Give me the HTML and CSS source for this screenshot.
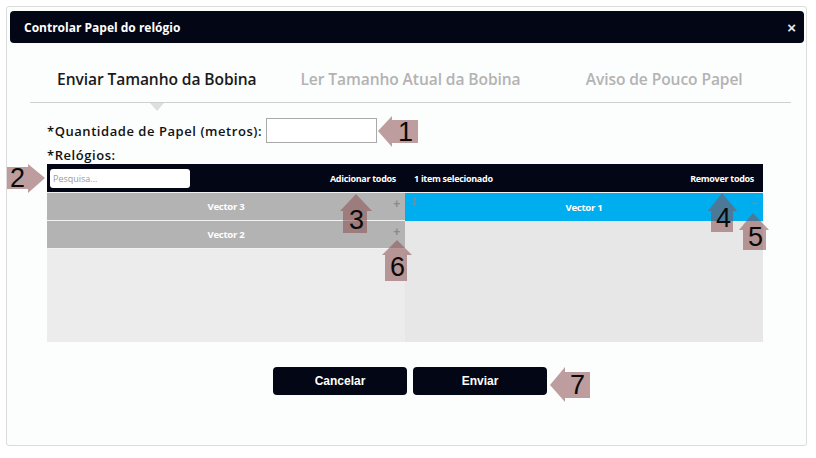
FILE: index.html
```html
<!DOCTYPE html>
<html lang="pt">
<head>
<meta charset="utf-8">
<title>Controlar Papel do relógio</title>
<link rel="stylesheet" href="styles.css">
</head>
<body>
<div class="modal">
  <div class="header">
    <span class="title">Controlar Papel do relógio</span>
    <span class="close">&#215;</span>
  </div>
  <div class="tabs">
    <div class="tab active">Enviar Tamanho da Bobina</div>
    <div class="tab">Ler Tamanho Atual da Bobina</div>
    <div class="tab">Aviso de Pouco Papel</div>
  </div>
  <div class="form">
    <div class="qty-row">
      <span class="field-label">*Quantidade de Papel (metros):</span>
      <span class="qty-input"></span>
    </div>
    <div class="field-label rel-label">*Relógios:</div>
    <div class="dual">
      <div class="pane pane-left">
        <div class="pane-head">
          <span class="search">Pesquisa...</span>
          <span class="head-link">Adicionar todos</span>
        </div>
        <div class="pane-body">
          <div class="item">Vector 3<span class="item-btn">+</span></div>
          <div class="item">Vector 2<span class="item-btn">+</span></div>
        </div>
      </div>
      <div class="pane pane-right">
        <div class="pane-head">
          <span class="head-info">1 item selecionado</span>
          <span class="head-link">Remover todos</span>
        </div>
        <div class="pane-body">
          <div class="item selected">
            <svg class="grip" width="5" height="9" viewBox="0 0 5 9"><path d="M2.5 0 L5 2.5 H3.3 V6.5 H5 L2.5 9 L0 6.5 H1.7 V2.5 H0 Z" fill="#6f8fa3"/></svg>
            Vector 1<span class="item-btn minus">&#8722;</span>
          </div>
        </div>
      </div>
    </div>
    <div class="actions">
      <button class="btn">Cancelar</button>
      <button class="btn">Enviar</button>
    </div>
  </div>
</div>

<div class="callout c1">
  <svg width="41" height="32" viewBox="0 0 41 32"><polygon points="0,15 14,0 14,4 40,4 40,27 14,27 14,31" /></svg>
  <span class="num n1">1</span>
</div>
<div class="callout c2">
  <svg width="42" height="30" viewBox="0 0 42 30"><polygon points="0,3 21,3 21,0 38,14 21,29 21,25 0,25" /></svg>
  <span class="num n2">2</span>
</div>
<div class="callout c3">
  <svg width="33" height="40" viewBox="0 0 33 40"><polygon points="16,0 32,17 27,17 27,39 3,39 3,17 0,17" /></svg>
  <span class="num n3">3</span>
</div>
<div class="callout c4">
  <svg width="30" height="40" viewBox="0 0 30 40"><polygon points="14,0 29,18 25,18 25,39 3,39 3,18 0,18" /></svg>
  <span class="num n4">4</span>
</div>
<div class="callout c5">
  <svg width="31" height="38" viewBox="0 0 31 38"><polygon points="14,0 30,17 27,17 27,37 4,37 4,17 0,17" /></svg>
  <span class="num n5">5</span>
</div>
<div class="callout c6">
  <svg width="31" height="42" viewBox="0 0 31 42"><polygon points="15,0 30,15 25,15 25,41 3,41 3,15 0,15" /></svg>
  <span class="num n6">6</span>
</div>
<div class="callout c7">
  <svg width="41" height="36" viewBox="0 0 41 36"><polygon points="0,18 15,0 15,5 40,5 40,31 15,31 15,35" /></svg>
  <span class="num n7">7</span>
</div>
</body>
</html>
```
FILE: styles.css
```css
* { box-sizing: border-box; }
html, body { margin: 0; padding: 0; background: #ffffff; }
body {
  position: relative;
  width: 816px;
  height: 458px;
  font-family: "Open Sans", "Noto Sans", sans-serif;
  color: #111;
  overflow: hidden;
}

.modal {
  margin: 6px 0 0 6px;
  width: 801px;
  height: 440px;
  border: 1px solid #dcdcdc;
  border-radius: 3px;
  background: #fcfdfd;
  padding: 4px 2px 0 3px;
}

.header {
  height: 32px;
  background: #030615;
  border-radius: 4px;
  display: flex;
  align-items: center;
  justify-content: space-between;
  padding: 0 8px 0 14px;
  color: #fff;
}
.title {
  font-size: 12px;
  font-weight: 700;
  letter-spacing: 0;
}
.close {
  font-family: "Liberation Sans", Arial, sans-serif;
  font-size: 15px;
  font-weight: 700;
  color: #e8e8e8;
}

.tabs {
  margin: 23px 13px 0 20px;
  display: grid;
  grid-template-columns: 1fr 1fr 1fr;
  border-bottom: 1px solid #cfcfcf;
  padding-bottom: 9px;
}
.tab {
  position: relative;
  text-align: center;
  font-size: 15.6px;
  font-weight: 600;
  line-height: 27px;
  letter-spacing: -0.1px;
  color: #b3b3b3;
}
.tab.active { color: #1a1a1a; }
.tab.active::after {
  content: "";
  position: absolute;
  left: 50%;
  bottom: -18px;
  margin-left: -7px;
  border-left: 7px solid transparent;
  border-right: 7px solid transparent;
  border-top: 8px solid #dedede;
}

.form {
  padding: 15px 0 0 37px;
}
.qty-row {
  display: flex;
  align-items: center;
  gap: 4px;
  height: 25px;
}
.field-label {
  font-size: 13px;
  font-weight: 600;
  letter-spacing: 0.55px;
  color: #111;
}
.qty-input {
  display: block;
  width: 111px;
  height: 25px;
  border: 1px solid #a9a9a9;
  background: #fff;
}
.rel-label {
  margin-top: 3px;
  line-height: 18px;
}

.dual {
  margin-top: 0;
  width: 716px;
  height: 178px;
  display: flex;
}
.pane { width: 358px; display: flex; flex-direction: column; }
.pane-head {
  height: 29px;
  background: #030615;
  border-bottom: 1px solid #f0f0f0;
  display: flex;
  align-items: center;
  justify-content: space-between;
  color: #fff;
  font-size: 9px;
  font-weight: 700;
  letter-spacing: -0.3px;
}
.pane-left .pane-head { padding: 0 9px 0 3px; }
.pane-right .pane-head { padding: 0 9px 0 9px; }
.search {
  width: 140px;
  height: 19px;
  background: #fff;
  border-radius: 3px;
  color: #9a9a9a;
  font-weight: 400;
  font-size: 9px;
  letter-spacing: 0;
  display: flex;
  align-items: center;
  padding-left: 3px;
}
.pane-body { flex: 1; }
.pane-left .pane-body { background: #ececec; }
.pane-right .pane-body { background: #e7e7e7; }
.item {
  position: relative;
  height: 28px;
  background: #b3b3b3;
  border-bottom: 1px solid #f2f2f2;
  display: flex;
  align-items: center;
  justify-content: center;
  color: #fff;
  font-size: 9.6px;
  font-weight: 700;
  letter-spacing: -0.3px;
}
.item.selected { background: #00aeef; border-bottom: none; }
.item-btn {
  position: absolute;
  right: 5px;
  top: 4px;
  font-family: "Liberation Sans", Arial, sans-serif;
  font-size: 12px;
  font-weight: 700;
  color: #8a8a8a;
}
.item-btn.minus { color: #5f92b3; right: 6px; top: 3px; }
.grip { position: absolute; left: 7px; top: 4px; }

.actions {
  margin-top: 25px;
  display: flex;
  justify-content: center;
  gap: 6px;
  width: 726px;
}
.btn {
  width: 134px;
  height: 28px;
  border: none;
  border-radius: 4px;
  background: #030615;
  color: #fff;
  font-family: "Liberation Sans", Arial, sans-serif;
  font-size: 12px;
  font-weight: 700;
}

.callout { position: absolute; }
.callout svg { display: block; }
.callout polygon { fill: rgba(138, 78, 80, 0.55); }
.num {
  position: absolute;
  font-family: "Liberation Sans", Arial, sans-serif;
  font-size: 27px;
  line-height: 27px;
  color: #0a0a0a;
}
.c1 { left: 378px; top: 116px; }
.n1 { left: 20px; top: 3px; }
.c2 { left: 7px; top: 164px; }
.n2 { left: 3px; top: 1px; }
.c3 { left: 340px; top: 194px; }
.n3 { left: 9px; top: 13px; }
.c4 { left: 708px; top: 193px; }
.n4 { left: 8px; top: 12px; }
.c5 { left: 739px; top: 213px; }
.n5 { left: 9px; top: 11px; }
.c6 { left: 382px; top: 240px; }
.n6 { left: 8px; top: 14px; }
.c7 { left: 550px; top: 367px; }
.n7 { left: 20px; top: 5px; }
```
